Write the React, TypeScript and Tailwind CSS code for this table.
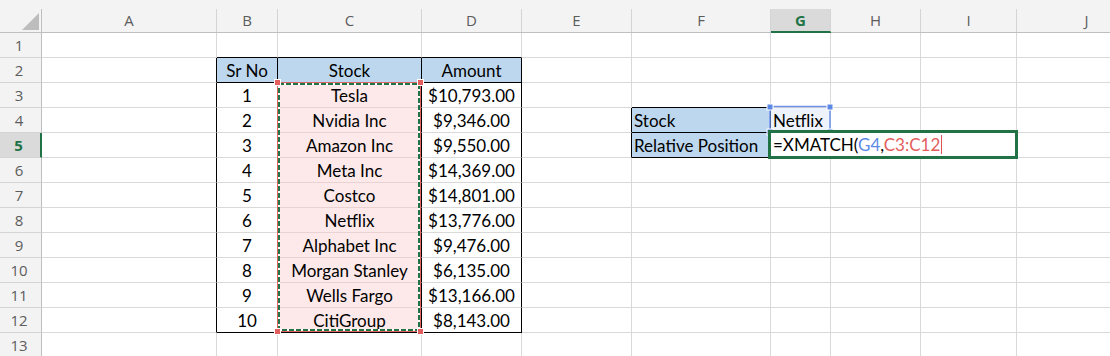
import React from "react";

// Sheet data: B3:D12
const stocks: [number, string, string][] = [
  [1, "Tesla", "$10,793.00"],
  [2, "Nvidia Inc", "$9,346.00"],
  [3, "Amazon Inc", "$9,550.00"],
  [4, "Meta Inc", "$14,369.00"],
  [5, "Costco", "$14,801.00"],
  [6, "Netflix", "$13,776.00"],
  [7, "Alphabet Inc", "$9,476.00"],
  [8, "Morgan Stanley", "$6,135.00"],
  [9, "Wells Fargo", "$13,166.00"],
  [10, "CitiGroup", "$8,143.00"],
];

const letters = ["A", "B", "C", "D", "E", "F", "G", "H", "I", "J"];
const ROWS = 13;
const ACTIVE_COL = 7; // G
const ACTIVE_ROW = 5;

const cellFont = { fontFamily: "Lato, 'Liberation Sans', sans-serif" };
const headFont = { fontFamily: "'Open Sans', 'Noto Sans', sans-serif" };

function cellText(r: number, c: number): string {
  if (r === 2) return ["", "", "Sr No", "Stock", "Amount"][c] ?? "";
  if (r >= 3 && r <= 12 && c >= 2 && c <= 4) {
    const row = stocks[r - 3];
    return String(row[c - 2]);
  }
  if (r === 4 && c === 6) return "Stock";
  if (r === 4 && c === 7) return "Netflix";
  if (r === 5 && c === 6) return "Relative Position";
  return "";
}

function isBlackRight(r: number, c: number) {
  if (r >= 2 && r <= 12 && c >= 1 && c <= 4) return true;
  if ((r === 4 || r === 5) && (c === 5 || c === 6)) return true;
  return false;
}

function isBlackBottom(r: number, c: number) {
  if (c >= 2 && c <= 4 && (r === 1 || r === 2 || r === 12)) return true;
  if (c === 6 && r >= 3 && r <= 5) return true;
  return false;
}

function Cell({ r, c }: { r: number; c: number }) {
  const inRange = c === 3 && r >= 3 && r <= 12;
  const blueFill = (r === 2 && c >= 2 && c <= 4) || (c === 6 && (r === 4 || r === 5));
  const right = isBlackRight(r, c) ? "border-r-black" : "border-r-[#d9d9d9]";
  const bottom = isBlackBottom(r, c)
    ? "border-b-black"
    : inRange
      ? "border-b-[#e8d2d2]"
      : "border-b-[#d9d9d9]";
  const bg = blueFill
    ? "bg-[#bdd7ee]"
    : inRange
      ? "bg-[#fde9e9]"
      : r === 4 && c === 7
        ? "bg-[#eef2fb]"
        : "bg-white";
  const align = c >= 2 && c <= 4 ? "justify-center" : "justify-start pl-[2px]";
  return (
    <div
      className={`flex items-center whitespace-nowrap border-r border-b pt-[2px] text-[17px] leading-[22px] text-black ${right} ${bottom} ${bg} ${align}`}
      style={cellFont}
    >
      {cellText(r, c)}
    </div>
  );
}

function ColumnHeader({ index }: { index: number }) {
  const active = index === ACTIVE_COL;
  return (
    <div
      className={`flex flex-col bg-[#f3f3f3] pt-[9px] border-b ${active ? "border-b-[#217346]" : "border-b-[#bfbfbf]"}`}
    >
      <div
        className={`flex h-full items-center justify-center border-r border-r-[#d4d4d4] text-[15px] leading-[23px] ${
          active ? "border-b border-b-[#217346] bg-[#dadada] font-bold text-[#217346]" : "text-[#5c5c5c]"
        }`}
        style={headFont}
      >
        {letters[index - 1]}
      </div>
    </div>
  );
}

function RowHeader({ row }: { row: number }) {
  const active = row === ACTIVE_ROW;
  return (
    <div
      className={`flex items-center justify-center pr-[3px] border-b border-b-[#d4d4d4] text-[15px] leading-[24px] ${
        active
          ? "border-r-2 border-r-[#217346] bg-[#dadada] font-bold text-[#217346]"
          : "border-r border-r-[#bfbfbf] bg-[#f3f3f3] text-[#5c5c5c]"
      }`}
      style={headFont}
    >
      {row}
    </div>
  );
}

function SelectAll() {
  return (
    <div className="flex flex-col bg-[#f3f3f3] pt-[9px] border-b border-b-[#bfbfbf]">
      <div className="flex h-full items-end justify-end border-r border-r-[#bfbfbf] pr-[2px] pb-[2px]">
        <svg width="17" height="17" viewBox="0 0 17 17">
          <polygon points="17,0 17,17 0,17" fill="#bdbdbd" />
        </svg>
      </div>
    </div>
  );
}

// range highlights drawn over the grid: C3:C12 (copy + reference) and G4 (reference)
function Highlights() {
  const redSquares = [
    [277.5, 82.5],
    [420.5, 82.5],
    [277.5, 331.5],
    [420.5, 331.5],
  ];
  const blueSquares = [
    [770, 107],
    [830, 107],
    [770, 132],
    [830, 132],
  ];
  return (
    <svg className="pointer-events-none absolute left-0 top-0" width="1110" height="356">
      <rect x="277.5" y="82.5" width="143" height="249" fill="none" stroke="#e06464" strokeWidth="1" />
      <rect x="279" y="84" width="140" height="246" fill="none" stroke="#ffffff" strokeWidth="2" />
      <rect
        x="279"
        y="84"
        width="140"
        height="246"
        fill="none"
        stroke="#217346"
        strokeWidth="2"
        strokeDasharray="5 2"
      />
      {redSquares.map(([x, y]) => (
        <rect key={`r${x}-${y}`} x={x - 3} y={y - 3} width="6" height="6" fill="#e35f5f" stroke="#ffffff" strokeWidth="1" />
      ))}
      <rect x="770" y="106.5" width="60" height="25.5" fill="none" stroke="#6f93e8" strokeWidth="1.5" />
      {blueSquares.map(([x, y]) => (
        <rect key={`b${x}-${y}`} x={x - 3} y={y - 3} width="6" height="6" fill="#5d88e6" stroke="#ffffff" strokeWidth="1" />
      ))}
    </svg>
  );
}

function FormulaEditor() {
  return (
    <div
      className="absolute left-[768px] top-[130px] flex h-[29px] w-[250px] items-center border-[3px] border-[#217346] bg-white pl-[2px] text-[17px] leading-[21px] text-black"
      style={cellFont}
    >
      <span className="whitespace-nowrap">
        =XMATCH(<span className="text-[#5b8be6]">G4</span>,<span className="text-[#e35d5d]">C3:C12</span>
      </span>
      <span className="ml-[1px] h-[19px] w-px bg-[#e05555]" />
    </div>
  );
}

export default function App(): React.ReactElement {
  const rows = Array.from({ length: ROWS }, (_, i) => i + 1);
  const cols = Array.from({ length: 10 }, (_, i) => i + 1);
  return (
    <div className="relative h-[356px] w-[1110px] overflow-hidden bg-white">
      <div className="grid grid-cols-[42px_175px_61px_144px_100px_110px_139px_60px_90px_96px_140px] grid-rows-[33px_repeat(13,25px)]">
        <SelectAll />
        {cols.map((c) => (
          <ColumnHeader key={`h${c}`} index={c} />
        ))}
        {rows.map((r) => (
          <React.Fragment key={`row${r}`}>
            <RowHeader row={r} />
            {cols.map((c) => (
              <Cell key={`${r}-${c}`} r={r} c={c} />
            ))}
          </React.Fragment>
        ))}
      </div>
      <Highlights />
      <FormulaEditor />
    </div>
  );
}
